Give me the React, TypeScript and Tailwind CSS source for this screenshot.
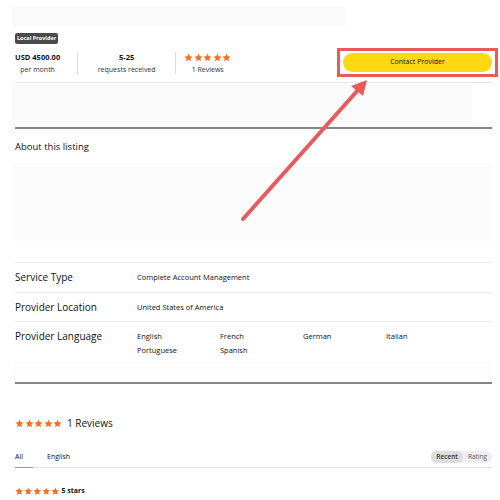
import React from "react";

const Star = ({ size = 8 }: { size?: number }) => (
  <svg width={size} height={size} viewBox="0 0 24 24">
    <polygon
      fill="#f26f21"
      points="12,1.5 15.1,8.6 22.8,9.3 17,14.4 18.7,22 12,18 5.3,22 7,14.4 1.2,9.3 8.9,8.6"
    />
  </svg>
);

const Stars = ({ size = 8 }: { size?: number }) => (
  <div className="flex gap-[0.5px]">
    {[0, 1, 2, 3, 4].map((i) => (
      <Star key={i} size={size} />
    ))}
  </div>
);

const DetailRow = ({ label, children }: { label: string; children: React.ReactNode }) => (
  <div className="flex h-[29.5px] items-start border-t border-[#e9e9e9] pt-[7px]">
    <div className="w-[122px] text-[10px] leading-[14px] text-[#111]">{label}</div>
    <div className="flex-1 text-[7.5px] leading-[14px] text-[#111]">{children}</div>
  </div>
);

const App = () => {
  return (
    <div
      className="relative h-[500px] w-[500px] overflow-hidden bg-white pl-[15px] pr-[8px] text-[#0f1111]"
      style={{ fontFamily: '"Open Sans", "Noto Sans", sans-serif' }}
    >
      {/* title placeholder */}
      <div className="-ml-[2px] mt-[7px] h-[19px] w-[333px] bg-[#fafafa]" />

      <div className="mt-[7px] flex h-[11px] w-fit items-center rounded-[2px] bg-[#4b4b4b] px-[2px] text-[5.5px] font-bold leading-none text-white">
        Local Provider
      </div>

      {/* stats row */}
      <div className="mt-[5px] flex h-[28px] items-center">
        <div className="flex items-center">
          <div className="pr-[17px] text-center">
            <div className="text-[7.5px] font-bold leading-[13px]">USD 4500.00</div>
            <div className="text-[7px] leading-[11px] text-[#333]">per month</div>
          </div>
          <div className="h-[22px] w-px bg-[#dcdcdc]" />
          <div className="w-[97px] text-center">
            <div className="text-[7.5px] font-bold leading-[13px]">5-25</div>
            <div className="text-[7px] leading-[11px] text-[#333]">requests received</div>
          </div>
          <div className="h-[22px] w-px bg-[#dcdcdc]" />
          <div className="flex flex-col items-center pl-[8px] pr-[4px]">
            <div className="flex h-[13px] items-center">
              <Stars size={9} />
            </div>
            <div className="text-[7px] leading-[11px] text-[#333]">1 Reviews</div>
          </div>
        </div>
        <div className="relative ml-auto -translate-y-px">
          <div className="flex h-[19px] w-[149px] items-center justify-center rounded-full bg-[#ffd814] text-[7px] font-medium text-[#111]">
            Contact Provider
          </div>
          <div className="absolute -inset-x-[6px] -inset-y-[5px] border-[3px] border-[#e85a5c]" />
        </div>
      </div>

      <div className="mt-[5px] h-px bg-[#e6e6e6]" />
      <div className="-ml-[2px] mt-[1px] h-[42px] w-[459px] bg-[#fafafa]" />
      <div className="mt-[1px] h-[2px] bg-[#7d8985]" />

      <div className="mt-[11px] text-[9.5px] leading-[14px] text-[#111]">About this listing</div>
      <div className="-ml-[2px] mt-[9px] h-[78px] bg-[#fcfcfc]" />

      <div className="mt-[21px]">
        <DetailRow label="Service Type">Complete Account Management</DetailRow>
        <DetailRow label="Provider Location">United States of America</DetailRow>
        <div className="flex items-start border-t border-[#e9e9e9] pt-[7px]">
          <div className="w-[122px] text-[10px] leading-[14px] text-[#111]">Provider Language</div>
          <div className="grid flex-1 grid-cols-[83px_83px_83px_83px] text-[7.5px] leading-[14px] text-[#111]">
            <span>English</span>
            <span>French</span>
            <span>German</span>
            <span>Italian</span>
            <span>Portuguese</span>
            <span>Spanish</span>
          </div>
        </div>
        <div className="-ml-[2px] mt-[4px] h-[19px] bg-[#fdfdfd]" />
      </div>

      <div className="mt-[2px] h-[2px] bg-[#7d8985]" />

      <div className="mt-[32px] flex items-center gap-[5px]">
        <Stars size={9} />
        <span className="text-[10px] leading-[14px] text-[#111]">1 Reviews</span>
      </div>

      {/* tabs */}
      <div className="mt-[21px] flex items-end border-b border-[#e3e3e3]">
        <div className="-mb-px w-[18px] border-b-[1.5px] border-[#9a9a9a] pb-[4px] text-[7px] leading-[12px]">All</div>
        <div className="ml-[14px] pb-[4px] text-[7px] leading-[12px]">English</div>
        <div className="mb-[4px] ml-auto flex h-[12px] items-center rounded-full bg-[#efefef] text-[6.5px]">
          <span className="flex h-full items-center rounded-full bg-[#dedede] px-[5px] font-semibold text-[#333]">Recent</span>
          <span className="px-[5px] text-[#555]">Rating</span>
        </div>
      </div>

      <div className="mt-[18px] flex items-center gap-[2px]">
        <Stars size={8.5} />
        <span className="text-[7px] font-bold leading-[10px]">5 stars</span>
      </div>

      {/* annotation arrow */}
      <svg className="pointer-events-none absolute left-0 top-0" width="500" height="500">
        <line x1="243" y1="219" x2="358" y2="90" stroke="#e85a5c" strokeWidth="4" strokeLinecap="round" />
        <polygon points="367,80 363,96 351,86" fill="#e85a5c" />
      </svg>
    </div>
  );
};

export default App;
